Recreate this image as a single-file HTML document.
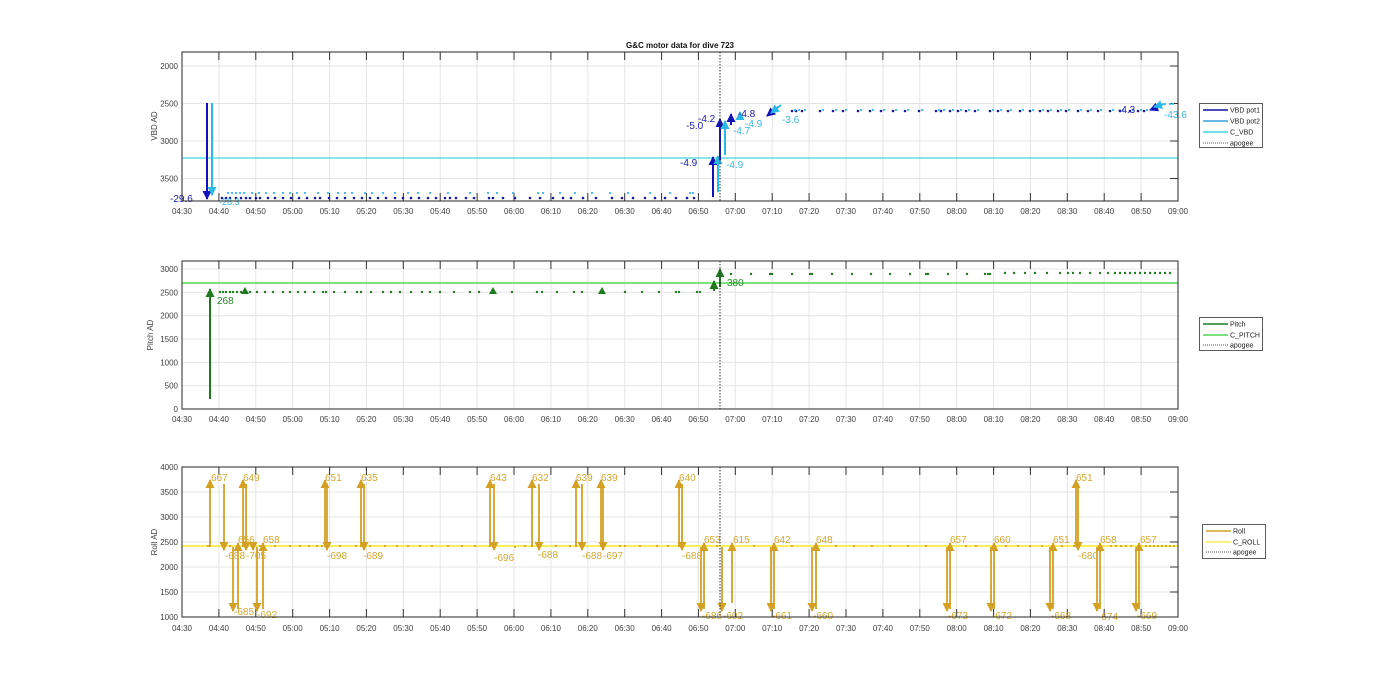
<!DOCTYPE html>
<html><head><meta charset="utf-8"><style>
html,body{margin:0;padding:0;background:#fff;width:1400px;height:693px;overflow:hidden}
svg{display:block;font-family:"Liberation Sans",sans-serif}
.tk{font-size:8px;fill:#404040}
.g{stroke:#e4e4e4;stroke-width:1}
.ax{fill:none;stroke:#262626;stroke-width:1}
.lg{font-size:7px;fill:#222}
</style></head><body>
<svg width="1400" height="693" viewBox="0 0 1400 693" xmlns="http://www.w3.org/2000/svg">
<defs>
<marker id="hd" markerUnits="userSpaceOnUse" markerWidth="9" markerHeight="9" refX="8" refY="4.5" orient="auto"><path d="M0,0 L9,4.5 L0,9 z" fill="#1212b8"/></marker>
<marker id="hc" markerUnits="userSpaceOnUse" markerWidth="9" markerHeight="9" refX="8" refY="4.5" orient="auto"><path d="M0,0 L9,4.5 L0,9 z" fill="#2ab8e8"/></marker>
<marker id="hg" markerUnits="userSpaceOnUse" markerWidth="9" markerHeight="9" refX="8" refY="4.5" orient="auto"><path d="M0,0 L9,4.5 L0,9 z" fill="#1f7a1f"/></marker>
<marker id="hr" markerUnits="userSpaceOnUse" markerWidth="9" markerHeight="9" refX="8" refY="4.5" orient="auto"><path d="M0,0 L9,4.5 L0,9 z" fill="#d4a023"/></marker>
<g id="vg">
<path class="g" d="M218.9 0v1M255.8 0v1"/>
</g>
</defs>

<text x="680" y="48" text-anchor="middle" font-size="8" font-weight="bold" fill="#111">G&amp;C motor data for dive 723</text>

<!-- vertical grid lines for all panels -->
<g class="g">
<path d="M218.9 52V201M255.8 52V201M292.7 52V201M329.6 52V201M366.4 52V201M403.3 52V201M440.2 52V201M477.1 52V201M514 52V201M550.9 52V201M587.8 52V201M624.7 52V201M661.6 52V201M698.4 52V201M735.3 52V201M772.2 52V201M809.1 52V201M846 52V201M882.9 52V201M919.8 52V201M956.7 52V201M993.6 52V201M1030.4 52V201M1067.3 52V201M1104.2 52V201M1141.1 52V201"/>
<path d="M218.9 261V409M255.8 261V409M292.7 261V409M329.6 261V409M366.4 261V409M403.3 261V409M440.2 261V409M477.1 261V409M514 261V409M550.9 261V409M587.8 261V409M624.7 261V409M661.6 261V409M698.4 261V409M735.3 261V409M772.2 261V409M809.1 261V409M846 261V409M882.9 261V409M919.8 261V409M956.7 261V409M993.6 261V409M1030.4 261V409M1067.3 261V409M1104.2 261V409M1141.1 261V409"/>
<path d="M218.9 467V617M255.8 467V617M292.7 467V617M329.6 467V617M366.4 467V617M403.3 467V617M440.2 467V617M477.1 467V617M514 467V617M550.9 467V617M587.8 467V617M624.7 467V617M661.6 467V617M698.4 467V617M735.3 467V617M772.2 467V617M809.1 467V617M846 467V617M882.9 467V617M919.8 467V617M956.7 467V617M993.6 467V617M1030.4 467V617M1067.3 467V617M1104.2 467V617M1141.1 467V617"/>
<path d="M182 66H1178M182 103.5H1178M182 141H1178M182 178.5H1178"/>
<path d="M182 269H1178M182 292.3H1178M182 315.7H1178M182 339H1178M182 362.3H1178M182 385.7H1178"/>
<path d="M182 492H1178M182 517H1178M182 542H1178M182 567H1178M182 592H1178"/>
</g>
<!-- ticks -->
<g stroke="#333" stroke-width="1">
<path d="M218.9 52v8M255.8 52v8M292.7 52v8M329.6 52v8M366.4 52v8M403.3 52v8M440.2 52v8M477.1 52v8M514 52v8M550.9 52v8M587.8 52v8M624.7 52v8M661.6 52v8M698.4 52v8M735.3 52v8M772.2 52v8M809.1 52v8M846 52v8M882.9 52v8M919.8 52v8M956.7 52v8M993.6 52v8M1030.4 52v8M1067.3 52v8M1104.2 52v8M1141.1 52v8"/>
<path d="M218.9 201v-8M255.8 201v-8M292.7 201v-8M329.6 201v-8M366.4 201v-8M403.3 201v-8M440.2 201v-8M477.1 201v-8M514 201v-8M550.9 201v-8M587.8 201v-8M624.7 201v-8M661.6 201v-8M698.4 201v-8M735.3 201v-8M772.2 201v-8M809.1 201v-8M846 201v-8M882.9 201v-8M919.8 201v-8M956.7 201v-8M993.6 201v-8M1030.4 201v-8M1067.3 201v-8M1104.2 201v-8M1141.1 201v-8"/>
<path d="M218.9 261v8M255.8 261v8M292.7 261v8M329.6 261v8M366.4 261v8M403.3 261v8M440.2 261v8M477.1 261v8M514 261v8M550.9 261v8M587.8 261v8M624.7 261v8M661.6 261v8M698.4 261v8M735.3 261v8M772.2 261v8M809.1 261v8M846 261v8M882.9 261v8M919.8 261v8M956.7 261v8M993.6 261v8M1030.4 261v8M1067.3 261v8M1104.2 261v8M1141.1 261v8"/>
<path d="M218.9 467v8M255.8 467v8M292.7 467v8M329.6 467v8M366.4 467v8M403.3 467v8M440.2 467v8M477.1 467v8M514 467v8M550.9 467v8M587.8 467v8M624.7 467v8M661.6 467v8M698.4 467v8M735.3 467v8M772.2 467v8M809.1 467v8M846 467v8M882.9 467v8M919.8 467v8M956.7 467v8M993.6 467v8M1030.4 467v8M1067.3 467v8M1104.2 467v8M1141.1 467v8"/>
<path d="M218.9 617v-8M255.8 617v-8M292.7 617v-8M329.6 617v-8M366.4 617v-8M403.3 617v-8M440.2 617v-8M477.1 617v-8M514 617v-8M550.9 617v-8M587.8 617v-8M624.7 617v-8M661.6 617v-8M698.4 617v-8M735.3 617v-8M772.2 617v-8M809.1 617v-8M846 617v-8M882.9 617v-8M919.8 617v-8M956.7 617v-8M993.6 617v-8M1030.4 617v-8M1067.3 617v-8M1104.2 617v-8M1141.1 617v-8"/>
<path d="M1178 66h-8M1178 103.5h-8M1178 141h-8M1178 178.5h-8M1178 492h-8M1178 517h-8M1178 542h-8M1178 567h-8M1178 592h-8"/>
</g>

<!-- ============ PANEL 1 ============ -->
<line x1="182" y1="158" x2="1178" y2="158" stroke="#3fd8e0" stroke-width="1.3"/>
<path fill="none" stroke="#1a1aa0" stroke-width="2.6" stroke-linecap="round" d="M222 198h0M226 198h0M230 198h0M236 198h0M241 198h0M246 198h0M250 198h0M256 198h0M260 198h0M268 198h0M275 198h0M283 198h0M291 198h0M299 198h0M307 198h0M315 198h0M320 198h0M329 198h0M337 198h0M345 198h0M354 198h0M362 198h0M370 198h0M378 198h0M386 198h0M395 198h0M403 198h0M411 198h0M419 198h0M428 198h0M436 198h0M445 198h0M450 198h0M456 198h0M466 198h0M474 198h0M489 198h0M493 198h0M503 198h0M515 198h0M530 198h0M540 198h0M553 198h0M563 198h0M571 198h0M583 198h0M596 198h0M612 198h0M622 198h0M633 198h0M645 198h0M655 198h0M665 198h0M676 198h0M687 198h0M694 198h0
M792 111h0M796 111h0M802 111h0M820 111h0M833 111h0M843 111h0M858 111h0M870 111h0M881 111h0M893 111h0M905 111h0M919 111h0M936 111h0M941 111h0M950 111h0M958 111h0M966 111h0M975 111h0M990 111h0M998 111h0M1008 111h0M1020 111h0M1030 111h0M1040 111h0M1048 111h0M1058 111h0M1066 111h0M1078 111h0M1088 111h0M1098 111h0M1110 111h0M1120 111h0M1130 111h0M1138 111h0M1144 111h0"/>
<path fill="none" stroke="#3ab8f0" stroke-width="2.2" stroke-linecap="round" d="M228 193h0M232 193h0M236 193h0M240 193h0M244 193h0M252 193h0M259 193h0M266 193h0M274 193h0M283 193h0M290 193h0M297 193h0M305 193h0M318 193h0M328 193h0M338 193h0M345 193h0M352 193h0M365 193h0M372 193h0M383 193h0M395 193h0M408 193h0M418 193h0M430 193h0M448 193h0M470 193h0M488 193h0M497 193h0M513 193h0M538 193h0M543 193h0M560 193h0M575 193h0M592 193h0M610 193h0M628 193h0M650 193h0M670 193h0M690 193h0M693 193h0
M795 110h0M799 110h0M805 110h0M823 110h0M836 110h0M846 110h0M861 110h0M873 110h0M884 110h0M896 110h0M908 110h0M922 110h0M939 110h0M944 110h0M953 110h0M961 110h0M969 110h0M978 110h0M993 110h0M1001 110h0M1011 110h0M1023 110h0M1033 110h0M1043 110h0M1051 110h0M1061 110h0M1069 110h0M1081 110h0M1091 110h0M1101 110h0M1113 110h0M1123 110h0M1133 110h0M1141 110h0M1147 110h0M1160 105h0M1165 104h0M1170 104h0M1173 104h0"/>
<!-- vbd arrows -->
<g fill="none" stroke-width="2">
<line x1="207" y1="103" x2="207" y2="199" stroke="#1212b8" marker-end="url(#hd)"/>
<line x1="212" y1="103" x2="212" y2="195" stroke="#2ab8e8" marker-end="url(#hc)"/>
<line x1="713" y1="197" x2="713" y2="157" stroke="#1212b8" marker-end="url(#hd)"/>
<line x1="718" y1="192" x2="718" y2="156" stroke="#2ab8e8" marker-end="url(#hc)"/>
<line x1="720" y1="160" x2="720" y2="119" stroke="#1212b8" marker-end="url(#hd)"/>
<line x1="725" y1="155" x2="725" y2="121" stroke="#2ab8e8" marker-end="url(#hc)"/>
<line x1="731" y1="125" x2="731" y2="114" stroke="#1212b8" marker-end="url(#hd)"/>
<line x1="740" y1="120" x2="740" y2="112" stroke="#2ab8e8" marker-end="url(#hc)"/>
<line x1="778" y1="107" x2="767" y2="116" stroke="#1212b8" marker-end="url(#hd)"/>
<line x1="781" y1="105" x2="771" y2="113" stroke="#2ab8e8" marker-end="url(#hc)"/>
<line x1="1160" y1="106" x2="1150" y2="110" stroke="#1212b8" marker-end="url(#hd)"/>
<line x1="1164" y1="104" x2="1154" y2="107" stroke="#2ab8e8" marker-end="url(#hc)"/>
</g>
<g font-size="10">
<text x="170" y="202" fill="#1a1ab0">-29.6</text>
<text x="219" y="205" fill="#3ab8e8" font-size="9">-28.3</text>
<text x="680" y="166" fill="#1a1ab0">-4.9</text>
<text x="726" y="168" fill="#3ab8e8">-4.9</text>
<text x="686" y="129" fill="#1a1ab0">-5.0</text>
<text x="698" y="122" fill="#1a1ab0">-4.2</text>
<text x="733" y="134" fill="#3ab8e8">-4.7</text>
<text x="738" y="117" fill="#1a1ab0">-4.8</text>
<text x="745" y="127" fill="#3ab8e8">-4.9</text>
<text x="782" y="123" fill="#3ab8e8">-3.6</text>
<text x="1118" y="113" fill="#1a1ab0">-4.3</text>
<text x="1164" y="118" fill="#3ab8e8">-43.6</text>
</g>
<line x1="720" y1="52" x2="720" y2="201" stroke="#333" stroke-dasharray="1.5,1.5"/>
<rect class="ax" x="182" y="52" width="996" height="149"/>
<g class="tk" text-anchor="end">
<text x="178" y="69">2000</text><text x="178" y="106.5">2500</text><text x="178" y="144">3000</text><text x="178" y="181.5">3500</text>
</g>
<text class="tk" transform="translate(157,126) rotate(-90)" text-anchor="middle">VBD AD</text>
<g class="tk" text-anchor="middle">
<text x="182" y="214">04:30</text><text x="218.9" y="214">04:40</text><text x="255.8" y="214">04:50</text><text x="292.7" y="214">05:00</text><text x="329.6" y="214">05:10</text><text x="366.4" y="214">05:20</text><text x="403.3" y="214">05:30</text><text x="440.2" y="214">05:40</text><text x="477.1" y="214">05:50</text><text x="514" y="214">06:00</text><text x="550.9" y="214">06:10</text><text x="587.8" y="214">06:20</text><text x="624.7" y="214">06:30</text><text x="661.6" y="214">06:40</text><text x="698.4" y="214">06:50</text><text x="735.3" y="214">07:00</text><text x="772.2" y="214">07:10</text><text x="809.1" y="214">07:20</text><text x="846" y="214">07:30</text><text x="882.9" y="214">07:40</text><text x="919.8" y="214">07:50</text><text x="956.7" y="214">08:00</text><text x="993.6" y="214">08:10</text><text x="1030.4" y="214">08:20</text><text x="1067.3" y="214">08:30</text><text x="1104.2" y="214">08:40</text><text x="1141.1" y="214">08:50</text><text x="1178" y="214">09:00</text>
</g>
<rect x="1199.5" y="103.5" width="63" height="44" fill="#fff" stroke="#333" stroke-width="0.8"/>
<line x1="1203" y1="110" x2="1228" y2="110" stroke="#1212a0" stroke-width="1.5"/>
<line x1="1203" y1="121" x2="1228" y2="121" stroke="#3a9ee0" stroke-width="1.5"/>
<line x1="1203" y1="132" x2="1228" y2="132" stroke="#3fd8e0" stroke-width="1.5"/>
<line x1="1203" y1="143" x2="1228" y2="143" stroke="#555" stroke-dasharray="1,1"/>
<text class="lg" x="1230" y="112.5">VBD pot1</text><text class="lg" x="1230" y="123.5">VBD pot2</text><text class="lg" x="1230" y="134.5">C_VBD</text><text class="lg" x="1230" y="145.5">apogee</text>

<!-- ============ PANEL 2 ============ -->
<line x1="182" y1="283" x2="1178" y2="283" stroke="#52d852" stroke-width="1.4"/>
<path fill="none" stroke="#1f7a1f" stroke-width="2.4" stroke-linecap="round" d="M220 292h0M223 292h0M226 292h0M230 292h0M233 292h0M237 292h0M241 292h0M250 292h0M257 292h0M265 292h0M273 292h0M283 292h0M290 292h0M298 292h0M305 292h0M314 292h0M323 292h0M326 292h0M334 292h0M345 292h0M357 292h0M361 292h0M371 292h0M383 292h0M391 292h0M400 292h0M411 292h0M422 292h0M430 292h0M440 292h0M454 292h0M470 292h0M479 292h0M512 292h0M537 292h0M542 292h0M557 292h0M574 292h0M582 292h0M625 292h0M642 292h0M659 292h0M676 292h0M679 292h0M697 292h0M700 292h0
M731 274h0M751 274h0M770 274h0M772 274h0M792 274h0M810 274h0M812 274h0M832 274h0M852 274h0M871 274h0M890 274h0M910 274h0M926 274h0M928 274h0M948 274h0M967 274h0M985 274h0M988 274h0M990 274h0M1005 273h0M1014 273h0M1025 273h0M1035 273h0M1047 273h0M1060 273h0M1068 273h0M1073 273h0M1080 273h0M1090 273h0M1100 273h0M1108 273h0M1115 273h0M1120 273h0M1125 273h0M1130 273h0M1135 273h0M1140 273h0M1145 273h0M1150 273h0M1155 273h0M1160 273h0M1165 273h0M1170 273h0"/>
<g fill="#1f7a1f"><path d="M241 294l4-7 4 7z"/><path d="M489 294l4-7 4 7z"/><path d="M598 294l4-7 4 7z"/></g>
<g fill="none" stroke="#1f7a1f" stroke-width="2">
<line x1="210" y1="399" x2="210" y2="289" marker-end="url(#hg)"/>
<line x1="714" y1="291" x2="714" y2="281" marker-end="url(#hg)"/>
<line x1="720" y1="287" x2="720" y2="269" marker-end="url(#hg)"/>
</g>
<text x="217" y="304" font-size="10" fill="#2a8a2a">268</text>
<text x="727" y="286" font-size="10" fill="#2a8a2a">380</text>
<line x1="720" y1="261" x2="720" y2="409" stroke="#333" stroke-dasharray="1.5,1.5"/>
<rect class="ax" x="182" y="261" width="996" height="148"/>
<g class="tk" text-anchor="end">
<text x="178" y="272">3000</text><text x="178" y="295.3">2500</text><text x="178" y="318.7">2000</text><text x="178" y="342">1500</text><text x="178" y="365.3">1000</text><text x="178" y="388.7">500</text><text x="178" y="412">0</text>
</g>
<text class="tk" transform="translate(153,335) rotate(-90)" text-anchor="middle">Pitch AD</text>
<g class="tk" text-anchor="middle">
<text x="182" y="422">04:30</text><text x="218.9" y="422">04:40</text><text x="255.8" y="422">04:50</text><text x="292.7" y="422">05:00</text><text x="329.6" y="422">05:10</text><text x="366.4" y="422">05:20</text><text x="403.3" y="422">05:30</text><text x="440.2" y="422">05:40</text><text x="477.1" y="422">05:50</text><text x="514" y="422">06:00</text><text x="550.9" y="422">06:10</text><text x="587.8" y="422">06:20</text><text x="624.7" y="422">06:30</text><text x="661.6" y="422">06:40</text><text x="698.4" y="422">06:50</text><text x="735.3" y="422">07:00</text><text x="772.2" y="422">07:10</text><text x="809.1" y="422">07:20</text><text x="846" y="422">07:30</text><text x="882.9" y="422">07:40</text><text x="919.8" y="422">07:50</text><text x="956.7" y="422">08:00</text><text x="993.6" y="422">08:10</text><text x="1030.4" y="422">08:20</text><text x="1067.3" y="422">08:30</text><text x="1104.2" y="422">08:40</text><text x="1141.1" y="422">08:50</text><text x="1178" y="422">09:00</text>
</g>
<rect x="1199.5" y="317.5" width="63" height="33" fill="#fff" stroke="#333" stroke-width="0.8"/>
<line x1="1203" y1="324" x2="1228" y2="324" stroke="#1f7a1f" stroke-width="1.5"/>
<line x1="1203" y1="335" x2="1228" y2="335" stroke="#52d852" stroke-width="1.5"/>
<line x1="1203" y1="345" x2="1228" y2="345" stroke="#555" stroke-dasharray="1,1"/>
<text class="lg" x="1230" y="326.5">Pitch</text><text class="lg" x="1230" y="337.5">C_PITCH</text><text class="lg" x="1230" y="347.5">apogee</text>

<!-- ============ PANEL 3 ============ -->
<line x1="182" y1="546" x2="1178" y2="546" stroke="#f6ee5a" stroke-width="2"/>
<path fill="none" stroke="#c8982a" stroke-width="2" stroke-linecap="round" d="M208 546h0M230 546h0M260 546h0M275 546h0M290 546h0M300 546h0M309 546h0M317 546h0M322 546h0M340 546h0M356 546h0M370 546h0M385 546h0M397 546h0M408 546h0M420 546h0M432 546h0M448 546h0M462 546h0M475 546h0M515 547h0M525 546h0M556 546h0M570 546h0M620 546h0M625 546h0M640 546h0M657 546h0M668 546h0M717 546h0M754 546h0M792 546h0M836 546h0M854 546h0M872 546h0M890 546h0M908 546h0M926 546h0M966 546h0M976 546h0M1006 546h0M1018 546h0M1030 546h0M1042 546h0M1062 546h0M1074 546h0M1111 546h0M1116 546h0M1121 546h0M1126 546h0M1131 546h0M1146 546h0M1150 546h0M1154 546h0M1158 546h0M1162 546h0M1166 546h0M1170 546h0M1174 546h0"/>
<g fill="none" stroke="#d4a023" stroke-width="1.8">
<!-- up to 3700 -->
<line x1="210" y1="547" x2="210" y2="480" marker-end="url(#hr)"/>
<line x1="243" y1="547" x2="243" y2="480" marker-end="url(#hr)"/>
<line x1="325" y1="547" x2="325" y2="480" marker-end="url(#hr)"/>
<line x1="361" y1="547" x2="361" y2="480" marker-end="url(#hr)"/>
<line x1="490" y1="547" x2="490" y2="480" marker-end="url(#hr)"/>
<line x1="532" y1="547" x2="532" y2="480" marker-end="url(#hr)"/>
<line x1="576" y1="547" x2="576" y2="480" marker-end="url(#hr)"/>
<line x1="601" y1="547" x2="601" y2="480" marker-end="url(#hr)"/>
<line x1="679" y1="547" x2="679" y2="480" marker-end="url(#hr)"/>
<line x1="1076" y1="547" x2="1076" y2="480" marker-end="url(#hr)"/>
<!-- down to ~2380 -->
<line x1="224" y1="484" x2="224" y2="550" marker-end="url(#hr)"/>
<line x1="246" y1="484" x2="246" y2="550" marker-end="url(#hr)"/>
<line x1="327" y1="484" x2="327" y2="550" marker-end="url(#hr)"/>
<line x1="364" y1="484" x2="364" y2="550" marker-end="url(#hr)"/>
<line x1="494" y1="484" x2="494" y2="550" marker-end="url(#hr)"/>
<line x1="539" y1="484" x2="539" y2="550" marker-end="url(#hr)"/>
<line x1="582" y1="484" x2="582" y2="550" marker-end="url(#hr)"/>
<line x1="603" y1="484" x2="603" y2="550" marker-end="url(#hr)"/>
<line x1="682" y1="484" x2="682" y2="550" marker-end="url(#hr)"/>
<line x1="1078" y1="484" x2="1078" y2="550" marker-end="url(#hr)"/>
<line x1="253" y1="547" x2="253" y2="550" marker-end="url(#hr)"/>
<!-- down to 1150 -->
<line x1="233" y1="547" x2="233" y2="611" marker-end="url(#hr)"/>
<line x1="257" y1="547" x2="257" y2="611" marker-end="url(#hr)"/>
<line x1="701" y1="547" x2="701" y2="611" marker-end="url(#hr)"/>
<line x1="722" y1="547" x2="722" y2="611" marker-end="url(#hr)"/>
<line x1="771" y1="547" x2="771" y2="611" marker-end="url(#hr)"/>
<line x1="812" y1="547" x2="812" y2="611" marker-end="url(#hr)"/>
<line x1="947" y1="547" x2="947" y2="611" marker-end="url(#hr)"/>
<line x1="991" y1="547" x2="991" y2="611" marker-end="url(#hr)"/>
<line x1="1050" y1="547" x2="1050" y2="611" marker-end="url(#hr)"/>
<line x1="1097" y1="547" x2="1097" y2="611" marker-end="url(#hr)"/>
<line x1="1136" y1="547" x2="1136" y2="611" marker-end="url(#hr)"/>
<!-- up from 1150 -->
<line x1="238" y1="609" x2="238" y2="543" marker-end="url(#hr)"/>
<line x1="263" y1="609" x2="263" y2="543" marker-end="url(#hr)"/>
<line x1="704" y1="609" x2="704" y2="543" marker-end="url(#hr)"/>
<line x1="732" y1="603" x2="732" y2="543" marker-end="url(#hr)"/>
<line x1="774" y1="609" x2="774" y2="543" marker-end="url(#hr)"/>
<line x1="816" y1="609" x2="816" y2="543" marker-end="url(#hr)"/>
<line x1="950" y1="609" x2="950" y2="543" marker-end="url(#hr)"/>
<line x1="994" y1="609" x2="994" y2="543" marker-end="url(#hr)"/>
<line x1="1053" y1="609" x2="1053" y2="543" marker-end="url(#hr)"/>
<line x1="1100" y1="609" x2="1100" y2="543" marker-end="url(#hr)"/>
<line x1="1139" y1="609" x2="1139" y2="543" marker-end="url(#hr)"/>
</g>
<g font-size="10" fill="#d4a830">
<text x="211" y="481">667</text><text x="243" y="481">649</text><text x="325" y="481">651</text><text x="361" y="481">635</text><text x="490" y="481">643</text><text x="532" y="481">632</text><text x="576" y="481">639</text><text x="601" y="481">639</text><text x="679" y="481">640</text><text x="1076" y="481">651</text>
<text x="225" y="559">-688</text><text x="246" y="559">-705</text><text x="327" y="559">-698</text><text x="363" y="559">-689</text><text x="494" y="561">-696</text><text x="538" y="558">-688</text><text x="582" y="559">-688</text><text x="603" y="559">-697</text><text x="682" y="559">-688</text><text x="1078" y="559">-680</text>
<text x="238" y="543">656</text><text x="263" y="543">658</text><text x="704" y="543">653</text><text x="733" y="543">615</text><text x="774" y="543">642</text><text x="816" y="543">648</text><text x="950" y="543">657</text><text x="994" y="543">660</text><text x="1053" y="543">651</text><text x="1100" y="543">658</text><text x="1140" y="543">657</text>
<text x="234" y="615">-685</text><text x="257" y="618">-692</text><text x="702" y="619">-686</text><text x="723" y="619">-602</text><text x="772" y="619">-661</text><text x="813" y="619">-660</text><text x="948" y="619">-673</text><text x="992" y="619">-672</text><text x="1051" y="619">-668</text><text x="1098" y="620">-674</text><text x="1137" y="619">-669</text>
</g>
<line x1="720" y1="467" x2="720" y2="617" stroke="#333" stroke-dasharray="1.5,1.5"/>
<rect class="ax" x="182" y="467" width="996" height="150"/>
<g class="tk" text-anchor="end">
<text x="178" y="470">4000</text><text x="178" y="495">3500</text><text x="178" y="520">3000</text><text x="178" y="545">2500</text><text x="178" y="570">2000</text><text x="178" y="595">1500</text><text x="178" y="620">1000</text>
</g>
<text class="tk" transform="translate(157,542) rotate(-90)" text-anchor="middle">Roll AD</text>
<g class="tk" text-anchor="middle">
<text x="182" y="631">04:30</text><text x="218.9" y="631">04:40</text><text x="255.8" y="631">04:50</text><text x="292.7" y="631">05:00</text><text x="329.6" y="631">05:10</text><text x="366.4" y="631">05:20</text><text x="403.3" y="631">05:30</text><text x="440.2" y="631">05:40</text><text x="477.1" y="631">05:50</text><text x="514" y="631">06:00</text><text x="550.9" y="631">06:10</text><text x="587.8" y="631">06:20</text><text x="624.7" y="631">06:30</text><text x="661.6" y="631">06:40</text><text x="698.4" y="631">06:50</text><text x="735.3" y="631">07:00</text><text x="772.2" y="631">07:10</text><text x="809.1" y="631">07:20</text><text x="846" y="631">07:30</text><text x="882.9" y="631">07:40</text><text x="919.8" y="631">07:50</text><text x="956.7" y="631">08:00</text><text x="993.6" y="631">08:10</text><text x="1030.4" y="631">08:20</text><text x="1067.3" y="631">08:30</text><text x="1104.2" y="631">08:40</text><text x="1141.1" y="631">08:50</text><text x="1178" y="631">09:00</text>
</g>
<rect x="1202.5" y="524.5" width="63" height="34" fill="#fff" stroke="#333" stroke-width="0.8"/>
<line x1="1206" y1="531" x2="1231" y2="531" stroke="#d4a023" stroke-width="1.5"/>
<line x1="1206" y1="542" x2="1231" y2="542" stroke="#f6ee5a" stroke-width="1.5"/>
<line x1="1206" y1="552" x2="1231" y2="552" stroke="#555" stroke-dasharray="1,1"/>
<text class="lg" x="1233" y="533.5">Roll</text><text class="lg" x="1233" y="544.5">C_ROLL</text><text class="lg" x="1233" y="554.5">apogee</text>
</svg>
</body></html>
